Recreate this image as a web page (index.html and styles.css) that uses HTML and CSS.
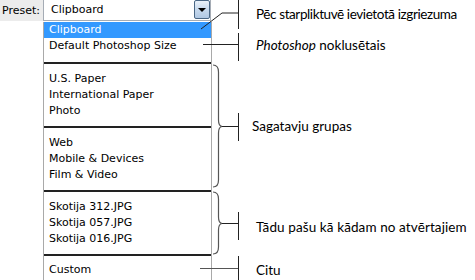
FILE: index.html
```html
<!DOCTYPE html>
<html lang="lv">
<head>
  <meta charset="UTF-8">
  <title>Preset</title>
  <link rel="stylesheet" href="styles.css">
</head>
<body>
  <div class="page">
    <div class="preset">
      <div class="preset-top">
        <div class="preset-label">Preset:</div>
        <div class="select">
          <span class="select-value">Clipboard</span>
          <span class="select-btn"><span class="arrow"></span></span>
        </div>
      </div>
      <div class="list">
        <div class="item active">Clipboard</div>
        <div class="item">Default Photoshop Size</div>
        <div class="group first">
          <div class="item">U.S. Paper</div>
          <div class="item">International Paper</div>
          <div class="item">Photo</div>
        </div>
        <div class="group">
          <div class="item">Web</div>
          <div class="item">Mobile &amp; Devices</div>
          <div class="item">Film &amp; Video</div>
        </div>
        <div class="group">
          <div class="item">Skotija 312.JPG</div>
          <div class="item">Skotija 057.JPG</div>
          <div class="item">Skotija 016.JPG</div>
        </div>
        <div class="group last">
          <div class="item">Custom</div>
        </div>
      </div>
    </div>

    <div class="notes">
      <div class="note n1">Pēc starpliktuvē ievietotā izgriezuma</div>
      <div class="note n2"><em>Photoshop</em> noklusētais</div>
      <div class="note n3">Sagatavju grupas</div>
      <div class="note n4">Tādu pašu kā kādam no atvērtajiem</div>
      <div class="note n5">Citu</div>
    </div>

    <!-- savienojuma līnijas -->
    <svg class="connectors" width="475" height="280" viewBox="0 0 475 280">
      <g fill="none" stroke="#222" stroke-width="1">
        <polyline points="201,29 222,13 238,13" />
        <line x1="238.5" y1="0" x2="238.5" y2="29" />
        <line x1="203" y1="44.5" x2="238" y2="44.5" />
        <line x1="238.5" y1="33" x2="238.5" y2="61" />
        <line x1="222" y1="126.5" x2="238" y2="126.5" />
        <line x1="238.5" y1="113" x2="238.5" y2="141" />
        <line x1="222" y1="223.5" x2="238" y2="223.5" />
        <line x1="238.5" y1="212" x2="238.5" y2="240" />
        <line x1="200" y1="268.5" x2="238" y2="268.5" stroke="#555" />
        <line x1="238.5" y1="256" x2="238.5" y2="280" />
      </g>
      <g fill="none" stroke="#555" stroke-width="1.2">
        <path d="M213,65 Q218.5,65 218.5,72 L218.5,120 Q218.5,126 222,126.5 Q218.5,127 218.5,133 L218.5,180 Q218.5,187 213,187" />
        <path d="M213,192 Q218.5,192 218.5,199 L218.5,217 Q218.5,223 222,223.5 Q218.5,224 218.5,230 L218.5,247 Q218.5,254 213,254" />
      </g>
    </svg>
  </div>
</body>
</html>
```

FILE: styles.css
```css
body {
  margin: 0;
  background: #fff;
  font-family: "DejaVu Sans", Tahoma, sans-serif;
  font-size: 11px;
  color: #000;
}
.page {
  position: relative;
  display: flex;
  width: 475px;
  height: 280px;
  overflow: hidden;
}
.preset {
  width: 213px;
  flex: none;
}
.preset-top {
  display: flex;
  height: 21px;
}
.preset-label {
  width: 41px;
  padding-left: 2px;
  background: #ececec;
  line-height: 21px;
}
.select {
  display: flex;
  justify-content: space-between;
  width: 168px;
  height: 21px;
  box-sizing: border-box;
  border: 1px solid #a5acb5;
  border-top: none;
  background: #fff;
}
.select-value {
  padding-left: 7px;
  line-height: 20px;
}
.select-btn {
  display: flex;
  align-items: center;
  justify-content: center;
  width: 16px;
  height: 19px;
  box-sizing: border-box;
  border: 1px solid #4a6785;
  border-radius: 2px;
  background: linear-gradient(#eaf1f9, #c4d7ec 55%, #b0c8e3);
}
.arrow {
  width: 0;
  height: 0;
  border-left: 4px solid transparent;
  border-right: 4px solid transparent;
  border-top: 4px solid #000;
}
.list {
  margin-top: 1px;
  margin-left: 43px;
  width: 169px;
  height: 258px;
  box-sizing: border-box;
  border-left: 1px solid #a9a9a9;
  border-right: 1px solid #a9a9a9;
}
.item {
  height: 16px;
  line-height: 16px;
  padding-left: 5px;
  white-space: nowrap;
}
.item.active {
  background: #3399ff;
  color: #fff;
}
.group {
  border-top: 2px solid #222;
  padding: 7px 0;
}
.group.first {
  margin-top: 8px;
}
.group.last {
  padding-top: 6px;
}
.notes {
  margin-left: 43px;
  font-family: Lato, "Open Sans", sans-serif;
  font-size: 13.5px;
  letter-spacing: -0.4px;
  line-height: 20px;
}
.note {
  white-space: nowrap;
}
.n1 { margin-top: 4px; }
.n2 { margin-top: 11px; letter-spacing: 0; }
.n3 { margin-top: 61px; margin-left: -4px; letter-spacing: 0; }
.n4 { margin-top: 81px; letter-spacing: 0.1px; }
.n5 { margin-top: 23px; letter-spacing: 0; }
.connectors {
  position: absolute;
  top: 0;
  left: 0;
  pointer-events: none;
}
```
